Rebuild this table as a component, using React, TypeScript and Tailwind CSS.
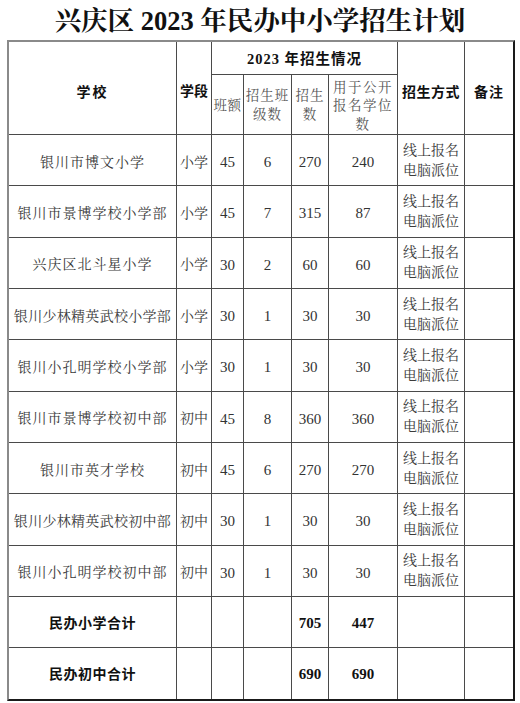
import React from "react";

const serif = "font-['Liberation_Serif','Noto_Serif_CJK_SC','Noto_Sans_CJK_SC',serif]";
const sans = "font-['Liberation_Serif','Noto_Sans_CJK_SC',sans-serif]";

type Row = [string, string, string, string, string, string, boolean];

const rows: Row[] = [
  ["银川市博文小学", "小学", "45", "6", "270", "240", false],
  ["银川市景博学校小学部", "小学", "45", "7", "315", "87", false],
  ["兴庆区北斗星小学", "小学", "30", "2", "60", "60", false],
  ["银川少林精英武校小学部", "小学", "30", "1", "30", "30", true],
  ["银川小孔明学校小学部", "小学", "30", "1", "30", "30", false],
  ["银川市景博学校初中部", "初中", "45", "8", "360", "360", false],
  ["银川市英才学校", "初中", "45", "6", "270", "270", false],
  ["银川少林精英武校初中部", "初中", "30", "1", "30", "30", true],
  ["银川小孔明学校初中部", "初中", "30", "1", "30", "30", false],
];

const cell = "bg-white flex items-center justify-center text-center";

export default function App() {
  return (
    <div className="w-[520px] h-[703px] bg-white overflow-hidden">
      <div
        className={`h-[40px] flex items-center justify-center text-[26.5px] font-bold text-[#111] leading-none pt-[2px] ${serif}`}
      >
        兴庆区 2023 年民办中小学招生计划
      </div>
      <div className="ml-[7px] w-[508px] border-2 border-t-[#8a8a8a] border-l-[#8a8a8a] border-r-[#1a1a1a] border-b-[#1a1a1a] bg-[#4a4a4a]">
        <div className="grid grid-cols-[167px_34px_31px_47px_36px_68px_66px_48px] grid-rows-[32px_59px_repeat(11,50.35px)] gap-px">
          {/* header */}
          <div className={`${cell} row-span-2 pt-[8px] text-[14px] font-bold tracking-[2px] text-[#111] ${sans}`}>学校</div>
          <div className={`${cell} row-span-2 pt-[6px] text-[14px] font-bold tracking-[0px] text-[#111] ${sans}`}>学段</div>
          <div className={`${cell} col-span-4 pt-[3px] text-[14.5px] font-bold tracking-[1px] text-[#111] ${sans}`}>2023 年招生情况</div>
          <div className={`${cell} row-span-2 pt-[8px] text-[14px] font-bold tracking-[0.5px] text-[#111] ${sans}`}>招生方式</div>
          <div className={`${cell} row-span-2 pt-[8px] text-[14px] font-bold tracking-[1px] text-[#111] ${sans}`}>备注</div>

          <div className={`${cell} pt-[4px] text-[13.5px] tracking-[0.5px] text-[#555] ${serif}`}>班额</div>
          <div className={`${cell} text-[13.5px] leading-[19px] tracking-[1px] text-[#555] ${serif}`}>
            招生班<br />级数
          </div>
          <div className={`${cell} text-[13.5px] leading-[19px] tracking-[1px] text-[#555] ${serif}`}>
            招生<br />数
          </div>
          <div className={`${cell} pt-[4px] text-[13.5px] leading-[18.5px] tracking-[1.5px] text-[#555] ${serif}`}>
            用于公开<br />报名学位<br />数
          </div>

          {rows.map((r, i) => (
            <React.Fragment key={i}>
              <div
                className={`${cell} pt-[4px] whitespace-nowrap text-[14px] text-[#3a3a3a] ${serif} ${r[6] ? "tracking-[0.3px]" : "tracking-[1px]"}`}
              >
                {r[0]}
              </div>
              <div className={`${cell} pt-[4px] text-[14px] text-[#3a3a3a] ${serif}`}>{r[1]}</div>
              <div className={`${cell} pt-[4px] text-[15px] text-[#333] ${serif}`}>{r[2]}</div>
              <div className={`${cell} pt-[4px] text-[15px] text-[#333] ${serif}`}>{r[3]}</div>
              <div className={`${cell} pt-[4px] text-[15px] text-[#333] ${serif}`}>{r[4]}</div>
              <div className={`${cell} pt-[4px] text-[15px] text-[#333] ${serif}`}>{r[5]}</div>
              <div className={`${cell} pt-[1px] text-[14px] leading-[20px] tracking-[0px] text-[#3a3a3a] ${serif}`}>
                线上报名<br />电脑派位
              </div>
              <div className={cell}></div>
            </React.Fragment>
          ))}

          {[
            ["民办小学合计", "705", "447"],
            ["民办初中合计", "690", "690"],
          ].map((t, i) => (
            <React.Fragment key={`t${i}`}>
              <div className={`${cell} pt-[2px] text-[14px] font-bold tracking-[0.5px] text-[#111] ${sans}`}>{t[0]}</div>
              <div className={cell}></div>
              <div className={cell}></div>
              <div className={cell}></div>
              <div className={`${cell} pt-[2px] text-[15px] font-bold text-[#111] ${serif}`}>{t[1]}</div>
              <div className={`${cell} pt-[2px] text-[15px] font-bold text-[#111] ${serif}`}>{t[2]}</div>
              <div className={cell}></div>
              <div className={cell}></div>
            </React.Fragment>
          ))}
        </div>
      </div>
    </div>
  );
}
